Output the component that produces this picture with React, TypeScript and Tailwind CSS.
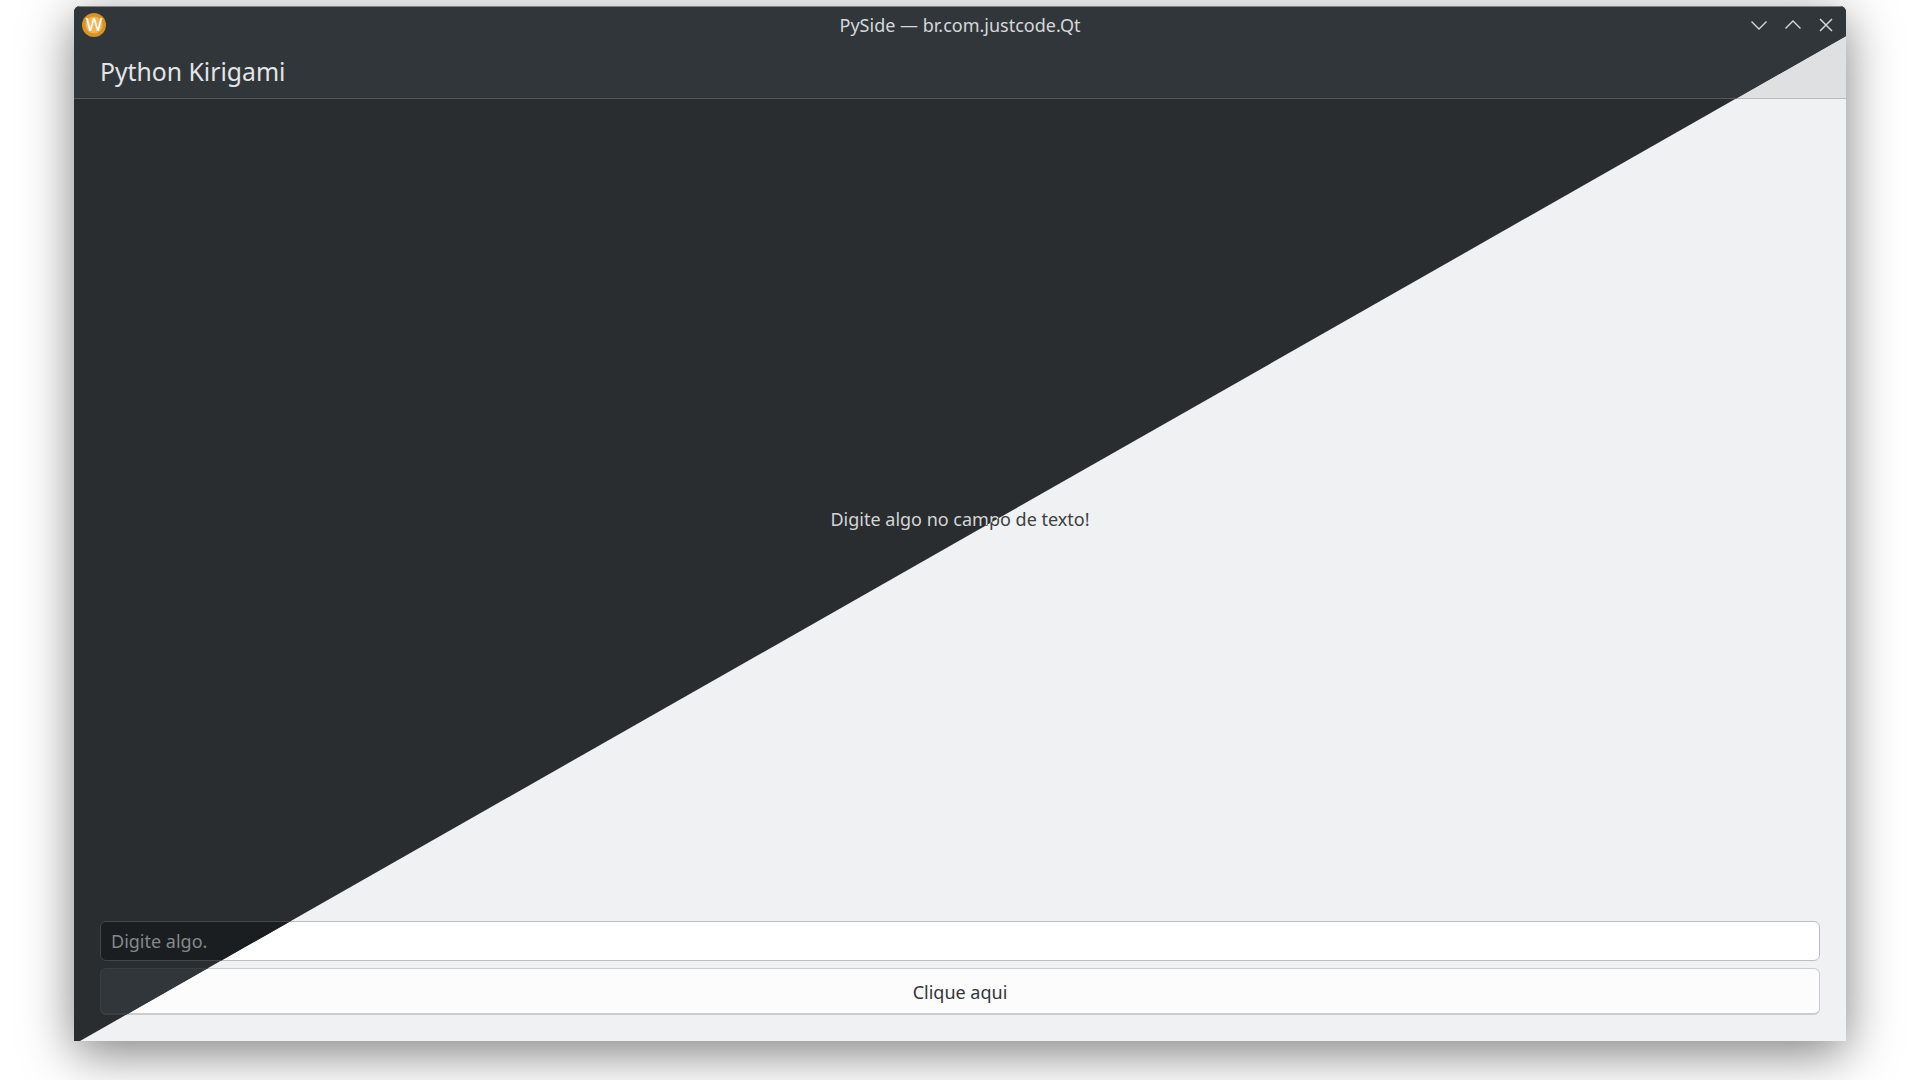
import React from 'react';

const lightTheme = {
  root: 'bg-[#eff1f2]',
  header: 'bg-[#dfe0e2] border-[#b9babc]',
  title: 'text-[#31363b]',
  heading: 'text-[#232629]',
  label: 'text-[#3b4045]',
  input: 'bg-white border-[#bcbec0] text-[#777a7d]',
  button: 'bg-[#fcfcfc] border-[#cbcccd] text-[#31363b]',
};

const darkTheme = {
  root: 'bg-[#2a2d30]',
  header: 'bg-[#31363a] border-[#54585c]',
  title: 'text-[#d6d8da]',
  heading: 'text-[#e3e5e7]',
  label: 'text-[#d3d5d7]',
  input: 'bg-[#1b1e20] border-[#42464a] text-[#85888b]',
  button: 'bg-[#31363b] border-[#3a3f44] text-[#d3d5d7]',
};

const WaylandIcon = () => (
  <svg className="-ml-[5px]" width="24" height="24" viewBox="0 0 24 24" aria-hidden="true">
    <circle cx="12" cy="12" r="12" fill="#d99326" />
    <circle cx="12" cy="12" r="8.5" fill="#f0b455" />
    <text x="12" y="18" textAnchor="middle" fontSize="18" fontFamily="Noto Sans" fill="#fff">
      W
    </text>
  </svg>
);

const WindowButtons = () => (
  <div className="flex items-center gap-[18px] justify-self-end text-[#d6d8da]">
    <svg width="16" height="10" viewBox="0 0 16 10" fill="none" stroke="currentColor" strokeWidth="1.4">
      <path d="M0.5 1.5L8 9L15.5 1.5" />
    </svg>
    <svg width="16" height="10" viewBox="0 0 16 10" fill="none" stroke="currentColor" strokeWidth="1.4">
      <path d="M0.5 8.5L8 1L15.5 8.5" />
    </svg>
    <svg width="14" height="14" viewBox="0 0 14 14" fill="none" stroke="currentColor" strokeWidth="1.5">
      <path d="M1 1L13 13M13 1L1 13" />
    </svg>
  </div>
);

const WindowContent = ({ theme }: { theme: typeof lightTheme }) => (
  <div className={`flex h-full w-full flex-col overflow-hidden rounded-t-[6px] ${theme.root}`}>
    <div className={`flex h-[93px] flex-col border-t border-t-[#80848a] border-b ${theme.header}`}>
      <div className="grid h-[38px] grid-cols-[1fr_auto_1fr] items-center px-[13px] pb-[2px]">
        <WaylandIcon />
        <span className={`text-[18px] ${theme.title}`}>PySide — br.com.justcode.Qt</span>
        <WindowButtons />
      </div>
      <div className="flex flex-1 items-center px-[26px] pt-[2px]">
        <span className={`text-[24.75px] leading-none ${theme.heading}`}>Python Kirigami</span>
      </div>
    </div>
    <div className="flex flex-1 items-center justify-center pt-[18px]">
      <span className={`text-[18px] ${theme.label}`}>Digite algo no campo de texto!</span>
    </div>
    <div className="flex flex-col gap-[7px] px-[26px] pb-[26px]">
      <div className={`flex h-[40px] items-center rounded-[6px] border px-[10px] text-[18px] ${theme.input}`}>Digite algo.</div>
      <div className={`flex h-[47px] items-center justify-center rounded-[6px] border border-b-2 pt-[2px] text-[18px] ${theme.button}`}>
        Clique aqui
      </div>
    </div>
  </div>
);

export default function App() {
  return (
    <div className="h-screen w-screen overflow-hidden bg-white pl-[74px] pt-[6px] font-['Noto_Sans',sans-serif]">
      <div className="relative h-[1035px] w-[1772px] rounded-t-[6px] shadow-[0_12px_50px_rgba(0,0,0,0.5)]">
        <WindowContent theme={lightTheme} />
        {/* the dark half of the picture sits over the light one, cut along the diagonal */}
        <div className="absolute inset-0 [clip-path:polygon(0_0,100%_0,100%_30px,6px_100%,0_100%)]">
          <WindowContent theme={darkTheme} />
        </div>
      </div>
    </div>
  );
}
